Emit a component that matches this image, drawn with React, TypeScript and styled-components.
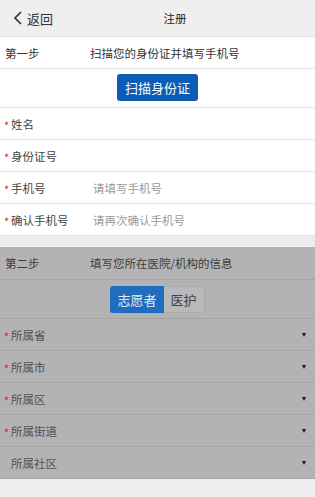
import { FC } from 'react'
import styled, { createGlobalStyle, css } from 'styled-components'

const GlobalStyle = createGlobalStyle`
  body {
    margin: 0;
    background: #eeeeee;
    font-family: "Noto Sans CJK SC", "Noto Sans", sans-serif;
  }
`

const Page = styled.div`
  width: 315px;
  display: flex;
  flex-direction: column;
`

const Header = styled.div`
  height: 37px;
  display: flex;
  align-items: center;
  padding-left: 13px;
  background: #efefef;
  border-bottom: 1px solid #e2e2e2;
  box-sizing: border-box;
`

const Back = styled.div`
  display: flex;
  align-items: center;
  gap: 4px;
  font-size: 13px;
  color: #333;
`

const Title = styled.div`
  flex: 1;
  text-align: center;
  padding-right: 18px;
  font-size: 11.5px;
  color: #222;
`

const Section = styled.div<{ $dim?: boolean }>`
  display: flex;
  flex-direction: column;
  background: ${(p) => (p.$dim ? '#b3b3b3' : '#ffffff')};
  --line: ${(p) => (p.$dim ? '#a4a4a4' : '#e4e4e4')};
  --text: ${(p) => (p.$dim ? '#3c3c3c' : '#333333')};
  --label: ${(p) => (p.$dim ? '#505050' : '#444444')};
`

const Gap = styled.div`
  height: 11px;
  background: #ededed;
`

const StepRow = styled.div<{ $tall?: boolean }>`
  height: ${(p) => (p.$tall ? 33 : 32)}px;
  display: flex;
  align-items: center;
  padding-left: 5px;
  border-bottom: 1px solid var(--line);
  box-sizing: border-box;
  font-size: 11.5px;
  color: var(--text);
`

const StepNo = styled.div`
  width: 85px;
`

const ActionRow = styled.div`
  height: 39px;
  display: flex;
  align-items: center;
  justify-content: center;
  border-bottom: 1px solid var(--line);
  box-sizing: border-box;
`

const ScanButton = styled.button`
  height: 27px;
  padding: 0 8px;
  border: none;
  border-radius: 3px;
  background: #0c5bb4;
  color: #fff;
  font-family: inherit;
  font-size: 13px;
  margin-top: -1px;
`

const Toggle = styled.div`
  display: flex;
  height: 27px;
  border-radius: 3px;
  overflow: hidden;
`

const ToggleItem = styled.div<{ $active?: boolean }>`
  display: flex;
  align-items: center;
  padding: 0 7px;
  font-size: 13px;
  ${(p) =>
    p.$active
      ? css`
          background: #1f6dbf;
          color: #e4e8ee;
        `
      : css`
          background: #b9b9b9;
          color: #444;
          border: 1px solid #adadad;
          border-left: none;
          border-radius: 0 3px 3px 0;
        `}
`

const FieldRow = styled.div`
  height: 32px;
  display: flex;
  align-items: center;
  padding: 0 9px 0 4px;
  border-bottom: 1px solid var(--line);
  box-sizing: border-box;
  font-size: 11.5px;
`

const Label = styled.div`
  width: 89px;
  display: flex;
  align-items: center;
  color: var(--label);
`

const Star = styled.span`
  width: 7px;
  color: #e0141e;
  font-size: 11px;
  line-height: 1;
  margin-top: 3px;
`

const Placeholder = styled.div`
  flex: 1;
  color: #9a9a9a;
`

const Caret = styled.span`
  width: 0;
  height: 0;
  border-left: 2.5px solid transparent;
  border-right: 2.5px solid transparent;
  border-top: 4px solid #1e1e1e;
`

const Field: FC<{ label: string; required?: boolean; hint?: string; select?: boolean }> = ({
  label,
  required,
  hint,
  select,
}) => (
  <FieldRow>
    <Label>
      <Star>{required ? '*' : ''}</Star>
      {label}
    </Label>
    <Placeholder>{hint}</Placeholder>
    {select && <Caret />}
  </FieldRow>
)

export default function App() {
  return (
    <Page>
      <GlobalStyle />
      <Header>
        <Back>
          <svg width="10" height="14" viewBox="0 0 10 14">
            <polyline points="8,1 2,7 8,13" fill="none" stroke="#333" strokeWidth="1.7" />
          </svg>
          返回
        </Back>
        <Title>注册</Title>
      </Header>
      <Section>
        <StepRow>
          <StepNo>第一步</StepNo>
          扫描您的身份证并填写手机号
        </StepRow>
        <ActionRow>
          <ScanButton>扫描身份证</ScanButton>
        </ActionRow>
        <Field label="姓名" required />
        <Field label="身份证号" required />
        <Field label="手机号" required hint="请填写手机号" />
        <Field label="确认手机号" required hint="请再次确认手机号" />
      </Section>
      <Gap />
      <Section $dim>
        <StepRow $tall>
          <StepNo>第二步</StepNo>
          填写您所在医院/机构的信息
        </StepRow>
        <ActionRow>
          <Toggle>
            <ToggleItem $active>志愿者</ToggleItem>
            <ToggleItem>医护</ToggleItem>
          </Toggle>
        </ActionRow>
        <Field label="所属省" required select />
        <Field label="所属市" required select />
        <Field label="所属区" required select />
        <Field label="所属街道" required select />
        <Field label="所属社区" select />
      </Section>
    </Page>
  )
}
